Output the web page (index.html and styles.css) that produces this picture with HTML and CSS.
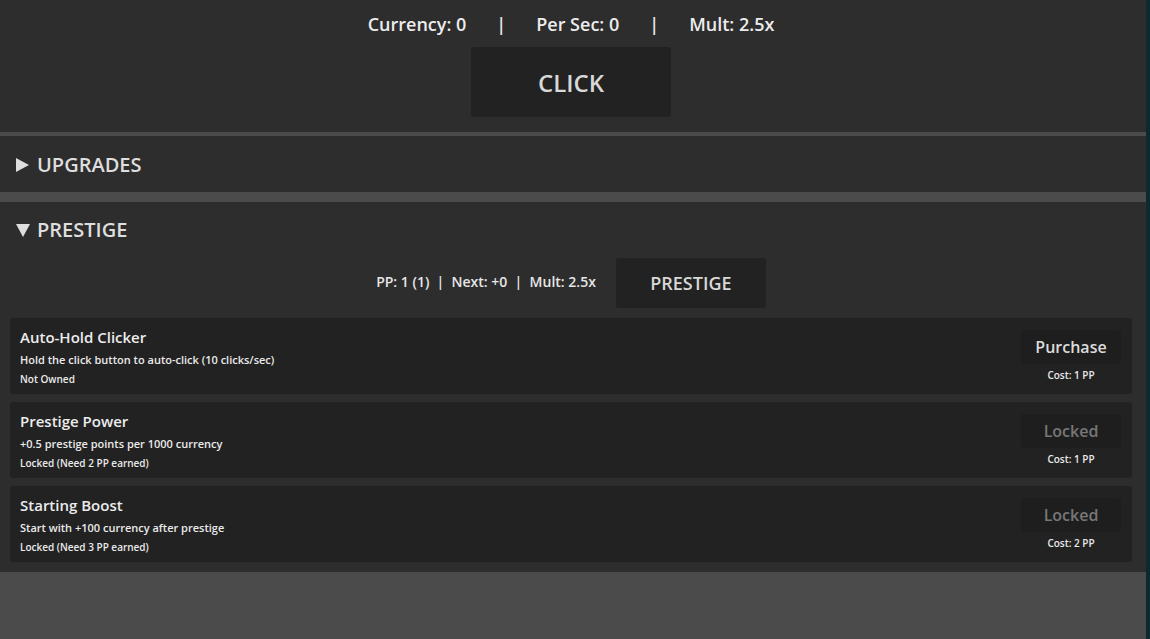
FILE: index.html
```html
<!DOCTYPE html>
<html lang="en">
<head>
<meta charset="utf-8">
<title>Clicker</title>
<link rel="stylesheet" href="styles.css">
</head>
<body>
<div class="page">
  <main class="game">
    <section class="panel top">
      <div class="stats">
        <span>Currency: 0</span>
        <span class="sep">|</span>
        <span>Per Sec: 0</span>
        <span class="sep">|</span>
        <span>Mult: 2.5x</span>
      </div>
      <button class="click-btn">CLICK</button>
    </section>

    <details class="panel upgrades">
      <summary>UPGRADES</summary>
    </details>

    <details class="panel prestige" open>
      <summary>PRESTIGE</summary>
      <div class="prestige-row">
        <span class="pp-info">PP: 1 (1) &nbsp;|&nbsp; Next: +0 &nbsp;|&nbsp; Mult: 2.5x</span>
        <button class="prestige-btn">PRESTIGE</button>
      </div>
      <div class="cards">
        <div class="card">
          <div class="card-info">
            <div class="card-title">Auto-Hold Clicker</div>
            <div class="card-desc">Hold the click button to auto-click (10 clicks/sec)</div>
            <div class="card-status">Not Owned</div>
          </div>
          <div class="card-action">
            <button class="buy-btn">Purchase</button>
            <div class="cost">Cost: 1 PP</div>
          </div>
        </div>
        <div class="card">
          <div class="card-info">
            <div class="card-title">Prestige Power</div>
            <div class="card-desc">+0.5 prestige points per 1000 currency</div>
            <div class="card-status">Locked (Need 2 PP earned)</div>
          </div>
          <div class="card-action">
            <button class="buy-btn locked">Locked</button>
            <div class="cost">Cost: 1 PP</div>
          </div>
        </div>
        <div class="card">
          <div class="card-info">
            <div class="card-title">Starting Boost</div>
            <div class="card-desc">Start with +100 currency after prestige</div>
            <div class="card-status">Locked (Need 3 PP earned)</div>
          </div>
          <div class="card-action">
            <button class="buy-btn locked">Locked</button>
            <div class="cost">Cost: 2 PP</div>
          </div>
        </div>
      </div>
    </details>
  </main>
  <div class="edge"></div>
</div>
</body>
</html>
```

FILE: styles.css
```css
* { box-sizing: border-box; }

html, body {
  margin: 0;
  padding: 0;
  height: 100%;
  background: #4b4b4b;
  font-family: "Open Sans", "Noto Sans", sans-serif;
  color: #e8e8e8;
}

.page {
  display: flex;
  min-height: 100%;
}

.game {
  flex: 1;
  display: flex;
  flex-direction: column;
}

.edge {
  width: 4px;
  background: #0d2a33;
}

.panel {
  background: #2d2d2d;
  padding-right: 4px;
}

.top {
  display: flex;
  flex-direction: column;
  align-items: center;
  padding-top: 11px;
  padding-bottom: 15px;
  margin-bottom: 4px;
}

.stats {
  display: flex;
  gap: 30px;
  font-size: 18px;
  font-weight: 600;
  line-height: 27px;
  color: #ececec;
  margin-bottom: 9px;
}

button {
  font-family: inherit;
  border: none;
  cursor: pointer;
}

.click-btn {
  width: 200px;
  height: 70px;
  background: #222222;
  color: #d8d8d8;
  font-size: 24px;
  font-weight: 600;
  border-radius: 3px;
}

.upgrades {
  margin-bottom: 10px;
}

summary {
  list-style: none;
  display: flex;
  align-items: center;
  padding: 17px 16px 15px;
  font-size: 20px;
  font-weight: 600;
  line-height: 24px;
  color: #dedede;
  cursor: pointer;
}

.prestige > summary {
  padding: 16px 16px;
}

summary::-webkit-details-marker { display: none; }

summary::before {
  content: "";
  width: 0;
  height: 0;
  border-top: 7px solid transparent;
  border-bottom: 7px solid transparent;
  border-left: 13px solid #dedede;
  margin-right: 8px;
}

details[open] > summary::before {
  border-left: 7px solid transparent;
  border-right: 7px solid transparent;
  border-top: 13px solid #dedede;
  border-bottom: 0;
  margin-right: 7px;
}

.prestige {
  padding-bottom: 10px;
}

.prestige-row {
  display: flex;
  justify-content: center;
  align-items: center;
  gap: 20px;
  margin-bottom: 10px;
}

.pp-info {
  font-size: 14px;
  font-weight: 600;
  line-height: 18px;
  color: #e6e6e6;
  margin-top: -2px;
}

.prestige-btn {
  width: 150px;
  height: 50px;
  background: #222222;
  color: #d8d8d8;
  font-size: 18px;
  font-weight: 600;
  border-radius: 3px;
}

.cards {
  display: flex;
  flex-direction: column;
  gap: 8px;
  padding: 0 10px;
}

.card {
  display: flex;
  justify-content: space-between;
  align-items: center;
  background: #222222;
  border-radius: 3px;
  padding: 10px 11px 10px 10px;
  height: 76px;
}

.card-info {
  align-self: flex-start;
  margin-top: -1px;
  display: flex;
  flex-direction: column;
}

.card-title {
  font-size: 15px;
  font-weight: 600;
  line-height: 20px;
  color: #ececec;
}

.card-desc {
  font-size: 11px;
  font-weight: 600;
  line-height: 14px;
  margin-top: 6px;
  color: #eaeaea;
}

.card-status {
  font-size: 10px;
  font-weight: 600;
  line-height: 14px;
  margin-top: 5px;
  color: #eaeaea;
}

.card-action {
  display: flex;
  flex-direction: column;
  align-items: center;
  gap: 4px;
}

.buy-btn {
  width: 100px;
  height: 34px;
  background: #1e1e1e;
  color: #dcdcdc;
  font-size: 16px;
  font-weight: 600;
  border-radius: 3px;
}

.buy-btn.locked {
  color: #777777;
  cursor: default;
}

.cost {
  font-size: 10px;
  font-weight: 600;
  line-height: 14px;
  color: #eaeaea;
}
```
